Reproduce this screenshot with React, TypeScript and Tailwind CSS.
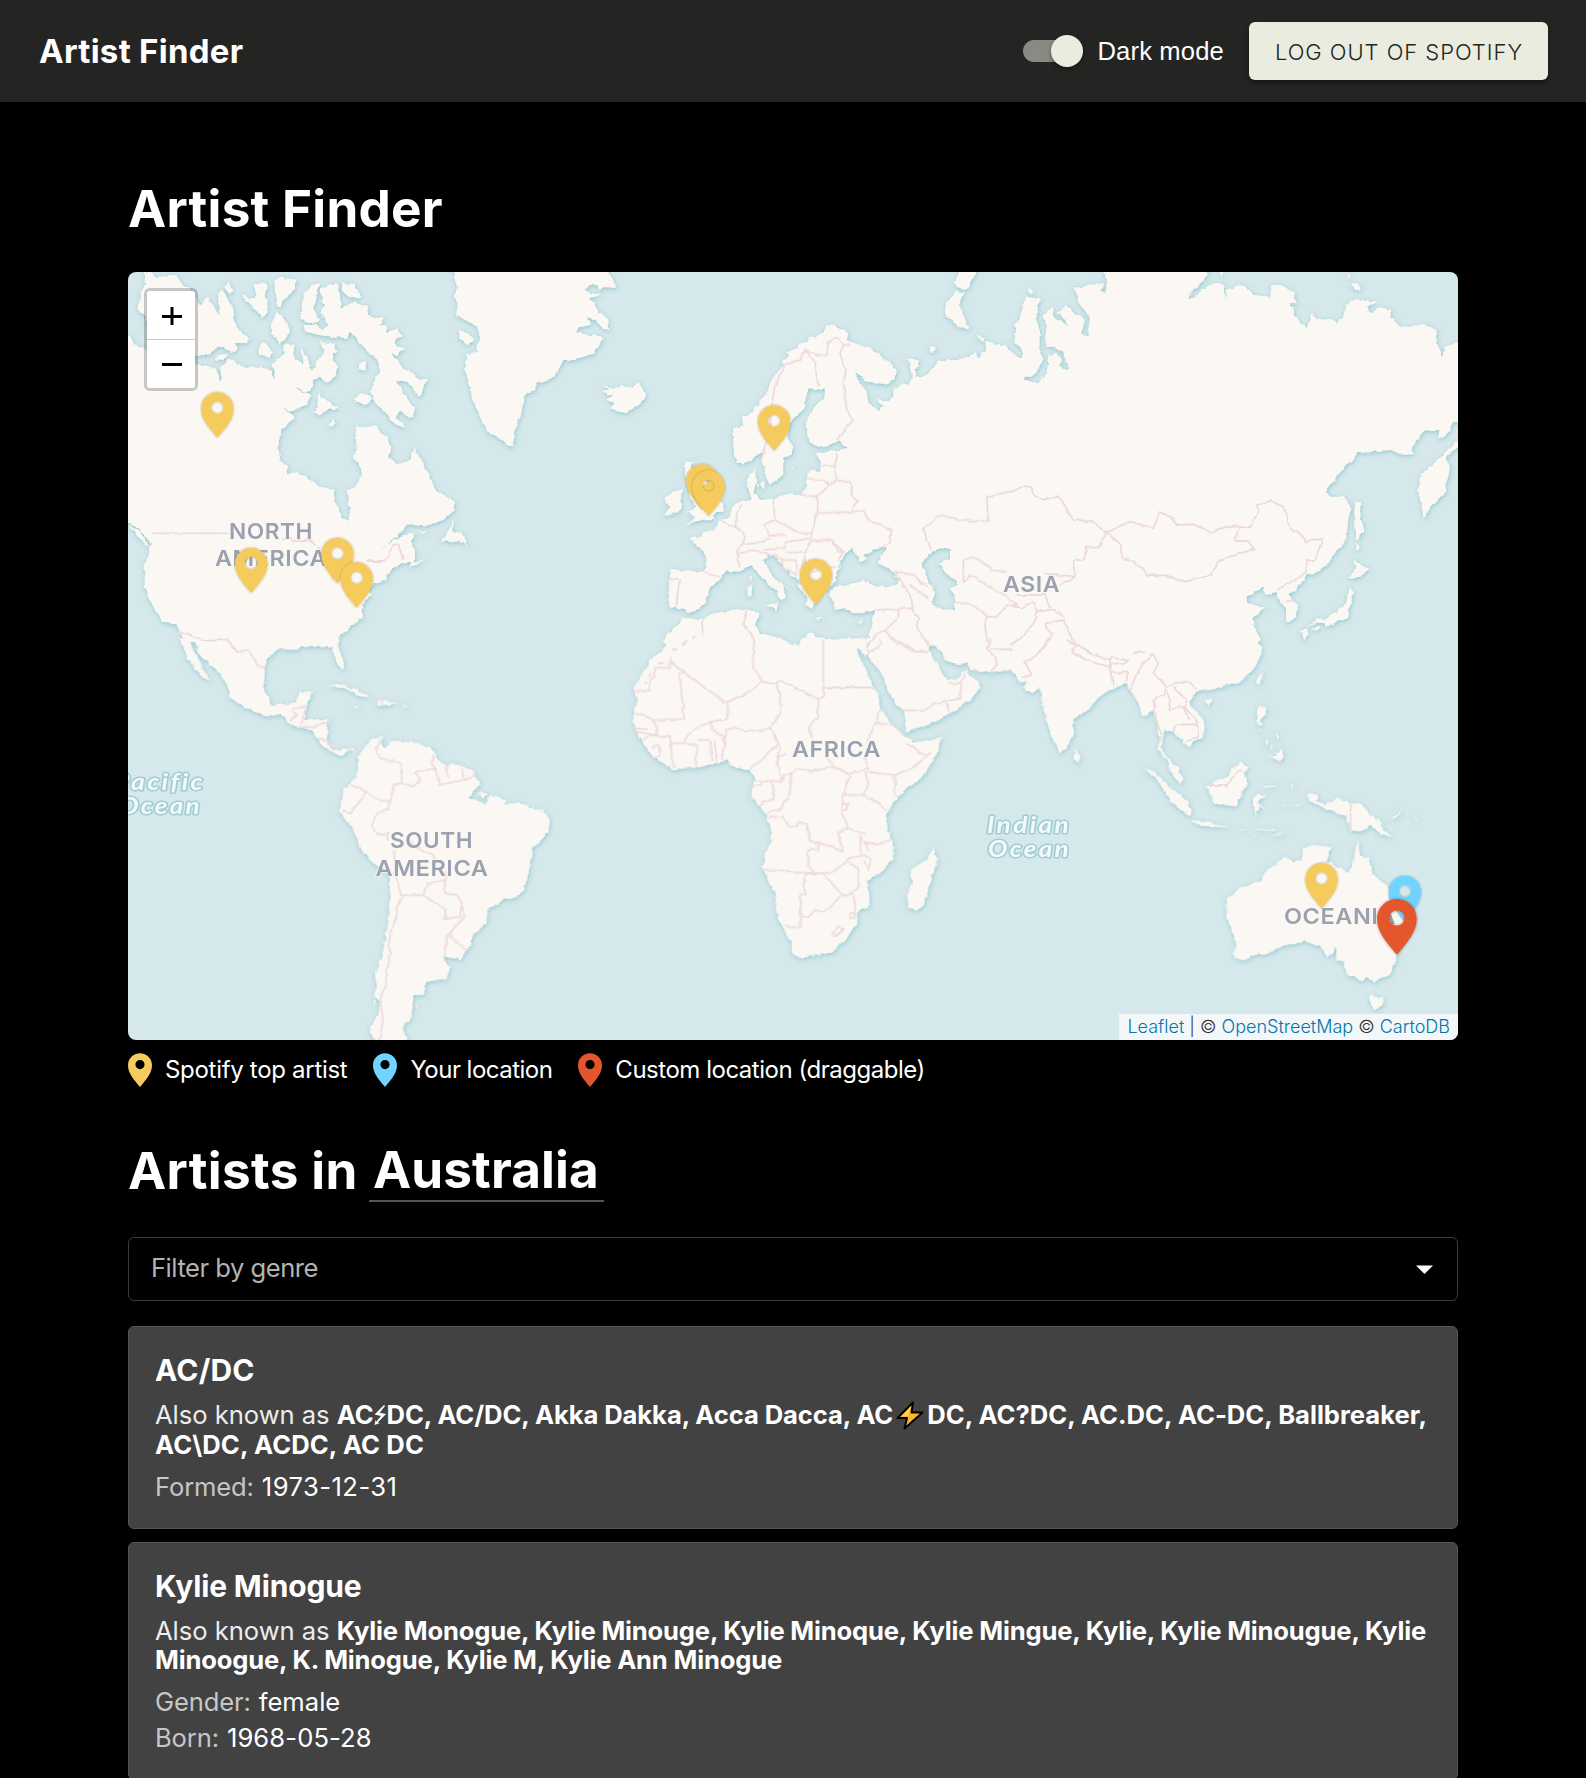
import React from "react";

type Tile = { x: number; y: number; land: string; borders: string };

// Coastlines and country borders, one entry per map tile (3 units per pixel).
const TILES: Tile[] = [
  {
    x: 120,
    y: 265,
    land: `M66,10L95,28 110,38 150,30 172,32 190,66 215,72 200,140 150,200 100,200 78,170 72,150 52,132 62,85 78,52Z
M160,110L228,98 240,118 262,94 280,120 300,150 294,80 306,76 322,100 336,130 344,180 362,200 388,222 380,235 345,238 355,255 330,262 312,245 290,250 270,265 228,275 150,260Z
M310,65L325,52 338,70 330,88Z
M366,92L376,88 388,100 400,100 410,90 395,60 430,52 440,60 435,90 446,110 445,145 425,160 405,135 385,115Z
M462,45L480,38 530,44 525,70 505,95 490,105 482,130 472,125 465,90Z
M600,55L570,60 548,90 541,160 570,178 590,175 603,165 580,130 590,100Z
M603,70L625,60 650,55 660,90 662,130 680,120 700,112 740,125 745,150 770,158 795,160 780,185 800,180 805,200 830,190 850,215 825,225 830,240 855,250 835,270 815,265 850,310 880,325 900,345 925,345 910,365 905,390 890,392 880,365 860,350 828,345 850,380 885,430 878,462 840,440 830,460 862,488 820,475 790,435 765,415 750,380 760,350 780,325 775,290 750,265 725,240 690,200 680,220 640,215 590,210 555,195 548,180 580,180 610,195 625,180 600,140 615,120 600,90Z
M665,55L700,60 725,95 690,100 672,85Z
M455,180L470,140 495,165 510,205 480,240 470,220 452,205Z
M412,262L430,230 460,265 445,280Z
M595,375L605,395 640,420 665,435 625,430 600,452 582,440 592,420Z
M700,398L725,385 765,395 735,420 705,412Z
M718,290L738,288 737,318 716,312Z
M624,478L640,464 645,472 630,484Z M284,283L300,270 325,265 315,278 290,288Z
M-10,205L24,210 50,243 75,245 100,270 228,300 260,305 285,308 295,325 300,352 305,340 300,310 325,280 350,295 375,305 430,305 452,315 460,342 465,320 455,295 490,270 495,235 520,240 525,275 548,300 542,252 560,270 575,320 590,290 605,275 610,255 600,230 640,235 650,260 635,270 655,310 645,335 620,350 600,335 580,350 575,378 555,382 525,365 540,378 575,388 560,420 530,430 510,440 488,428 525,455 500,480 480,510 474,560 480,590 500,600 505,628 530,620 560,635 605,670 640,670 645,715 665,755 685,770 690,735 680,680 715,655 722,625 715,595 697,580 710,555 705,480 735,487 765,480 800,515 812,545 808,575 830,600 845,590 870,585 885,545 900,580 925,625 945,670 1003,712 1000,740 950,778 860,782 830,815 745,888 800,840 850,810 885,805 870,830 885,855 885,880 865,912 900,892 927,880 900,886 850,895 820,910 800,930 800,945 760,960 745,975 755,990 735,1010 725,1035 730,1055 700,1080 660,1110 655,1132 200,1132 165,1075 125,1070 110,1040 90,1010 75,970 72,910 85,860 92,835 60,795 24,770 -10,750Z
M24,778L60,800 88,842 65,828 35,795Z
M995,10L1010,60 1003,90 1012,120 1008,150 1040,165 1070,185 1080,215 1070,260 1040,270 1035,320 1050,360 1058,410 1085,460 1100,495 1140,525 1160,535 1178,545 1185,500 1210,430 1215,390 1250,375 1250,355 1300,340 1330,285 1358,285V0H995Z
M1022,195L1045,205 1060,225 1045,240 1020,225Z
M1000,760L985,800 962,830 1030,830 1045,850 1035,815 1000,795Z M890,795L920,800 915,804Z`,
    borders: `M95,805H325 M485,820L510,818 520,828 565,825 605,850 M630,945L650,940 M170,1105L200,1105 250,1125 285,1128 300,1118 325,1128 350,1160 M740,888L790,888 805,878 815,845 835,840 850,885`,
  },
  {
    x: 570,
    y: 265,
    land: `M-5,288L30,278 65,268 105,218 65,210 20,203 25,188 65,180 45,155 80,165 100,195 118,198 115,160 85,140 75,115 55,100 95,92 45,78 70,55 90,75 105,70 135,65 130,45 115,21V0H-5Z
M92,375L115,375 95,355 130,375 155,360 185,368 205,352 228,385 215,415 165,443 120,430 135,415 108,405 125,392Z
M500,590L488,560 492,520 488,490 520,480 515,455 550,440 565,415 590,385 600,350 620,325 640,300 635,290 655,275 650,262 680,250 690,235 710,230 725,212 740,222 765,185 795,180 835,205 830,225 870,240 900,250 960,290 978,320 972,345 940,360 895,350 855,325 870,350 890,380 895,410 925,435 940,425 920,400 950,410 970,395 970,370 1000,355 1020,360 1025,335 1015,280 1045,285 1050,305 1035,310 1040,335 1070,330 1110,285 1150,285 1170,285 1215,265 1225,280 1250,260 1245,228 1300,240 1340,272 1340,1132 890,1132 905,1085 915,1035 880,1045 850,1045 825,1030 795,1035 785,1000 780,975 800,965 880,948 930,965 975,960 990,945 960,915 925,895 935,870 955,845 910,855 880,870 895,885 870,890 850,850 825,865 810,900 795,935 800,950 780,965 770,972 750,960 735,970 745,1000 735,1010 725,1035 710,1025 712,1000 700,985 685,960 685,945 660,930 640,905 620,880 595,870 580,885 595,915 620,945 660,975 640,965 645,990 635,1012 625,985 590,955 560,920 540,900 510,920 470,918 455,940 425,965 410,1000 395,1025 355,1042 330,1030 300,1028 292,1005 300,935 300,915 400,920 410,885 400,860 360,825 365,815 395,815 400,800 430,795 450,765 475,755 490,720 515,710 545,705 530,650 535,630 555,615 560,645 550,680 575,705 610,700 660,685 690,690 710,665 712,620 730,612 750,625 752,590 740,565 790,560 830,548 805,530 745,548 715,530 708,470 715,450 760,400 762,375 720,370 708,390 705,430 670,460 655,480 655,520 670,545 665,565 640,580 640,630 600,660 595,645 575,590 575,560 550,580 520,598Z
M1085,860L1115,848 1142,852 1140,880 1105,895 1130,925 1165,960 1140,970 1155,1000 1155,1038 1100,1030 1085,1010 1095,980 1065,930 1058,895Z
M572,655L585,652 580,672Z M560,658L568,656 565,668Z M590,1018L625,1015 620,1035Z M532,965L547,960 545,992 533,992Z M537,935L546,935 545,950Z M740,1056L768,1060 742,1064Z M860,1068L880,1062 868,1074Z M664,605L670,602 668,616Z
M345,595L372,585 360,605 368,620 400,640 430,680 460,720 460,735 430,750 430,765 385,768 345,782 378,755 350,742 378,725 360,700 345,625Z
M285,700L310,680 335,672 335,735 290,752 285,745 300,728Z
M280,1135L290,1110 330,1075 340,1055 385,1065 430,1045 500,1035 555,1035 568,1048 555,1080 575,1105 630,1120 650,1135Z
M690,1135L695,1120 720,1105 755,1118 835,1128 845,1135Z
M1175,0L1155,50 1160,70 1190,75 1215,30 1220,0Z M1155,78L1140,100 1125,130 1125,155 1150,170 1160,185 1197,190 1175,140 1172,100 1185,82Z M1080,245L1098,250 1090,265 1080,262Z M1218,205L1240,222 1235,230Z`,
    borders: `M605,420L615,360 645,295 690,285 700,260 720,270 M705,255L735,295 745,365 M700,250L740,272 770,268 775,230 800,218 820,240 840,237 M820,240L810,265 825,310 820,350 830,435 847,465 803,525 M605,420L600,500 580,560 578,575 M800,560L795,605 755,600 M795,605L800,645 M710,640L760,645 778,662 740,695 690,688 M778,662L800,645 840,650 845,685 862,710 845,740 740,745 722,820 M740,695L745,745 M850,740L880,735 895,765 930,780 965,795 960,835 935,845 M610,700L615,765 580,780 600,812 650,810 M615,765L680,800 722,805 M722,820L690,825 650,830 640,850 580,855 M720,828L785,825 805,860 825,860 M785,825L820,860 805,885 M705,865L645,860 M515,715L500,750 500,790 450,765 M500,790L525,805 520,835 500,860 510,905 M520,835L545,840 600,820 M505,865L550,855 600,870 M400,920L455,938 M300,942L328,945 318,1028 M530,1035L520,1075 545,1110 550,1130 M395,1065L400,1110 M720,828L700,880 690,960 M605,865L640,885 680,885 680,920 M635,885L640,910 680,930 M700,880L720,920 800,905 M915,1035L1025,1030 1020,990 975,920 1030,930 1055,955 1075,960 M1020,960L1075,1000 M1025,1030L1045,1060 1040,1085 1075,1140 M945,1095L985,1060 985,1035 M890,1150L915,1110 945,1095 960,1115 1040,1160 1070,1160 M1340,675L1250,695 1255,765 1215,770 1165,765 1115,750 1060,790 1085,858 M1180,950V885L1215,878 1270,915 1310,920 M1180,950L1200,930 1250,960 1345,1020 M1155,1015L1200,1015 1250,1050 1245,1080 1255,1150 M1250,1055L1280,1055 1310,1020 1345,1020 M378,1112L366,1120 M350,1130L335,1138 M320,1150L308,1156`,
  },
  {
    x: 1010,
    y: 265,
    land: `M-5,262L10,265 35,283 42,262 12,230 18,190 12,180 35,140 45,97 90,100 78,160 90,200 88,260 100,280 90,310 70,335 45,335 38,345 85,355 110,320 118,270 140,262 155,285 150,305 175,313 165,290 160,260 130,248 105,250 112,190 100,150 125,125 130,155 175,182 165,165 140,145 170,120 200,150 225,165 215,205 232,215 240,155 205,115 195,70 235,60 285,55 270,75 282,85 292,50 275,21V0H600L590,35 530,100 550,95 605,55 640,55 645,105 650,70 690,60 715,70 730,90 780,95 785,60 810,60 830,72 855,80 858,115 840,115 865,165 890,188 905,145 925,162 960,158 980,172 1000,155 1005,120 1030,102 1105,110 1070,125 1085,145 1110,125 1140,135 1145,160 1175,185 1245,178 1280,195 1282,235 1297,275 1305,240 1345,232H1375V470L1330,475 1320,500 1290,520 1285,495 1240,498 1205,550 1210,568 1185,570 1140,555 1045,565 1010,600 945,678 965,695 1000,695 1025,730 1015,760 1010,820 960,890 930,918 890,930 860,970 835,990 860,1020 862,1060 828,1070 828,1030 808,1010 800,985 765,990 760,965 705,1000 715,1015 765,1028 730,1060 740,1100 755,1132H-5Z
M1375,540L1340,545 1310,580 1320,610 1305,680 1260,730 1242,760 1225,680 1230,630 1290,580 1335,530 1375,520Z
M1038,710L1050,710 1052,760 1063,795 1045,825 1037,820 1035,750Z M1038,830L1048,855 1040,860Z
M1035,885L1050,900 1080,912 1050,935 1015,940 1035,915Z
M1020,965L1033,980 1020,1020 1015,1060 950,1082 945,1070 888,1085 920,1065 950,1060 1000,1025 1012,990Z
M870,1095L890,1090 895,1110 885,1122Z M905,1092L935,1083 920,1098Z
M1022,55L1045,55 1055,75 1030,75Z M1010,32L1020,32 1018,42Z M54,72L72,72 66,84 56,82Z M625,20L640,22 632,34Z`,
    borders: `M0,682L40,665 65,670 70,690 105,705 145,690 190,765 240,768 290,803 360,770 430,790 450,740 490,760 500,780 550,778 605,803 660,782 720,790 745,735 740,720 780,708 820,725 840,790 870,805 885,830 938,822 915,885 888,885 888,925 800,975 M290,803L265,848 230,848 222,883 190,888 195,935 100,925 M290,803L335,840 338,882 375,890 415,930 470,932 530,950 605,930 625,890 690,865 735,850 715,828 675,828 688,792 M195,935L150,960 M0,1025L40,1028 70,1010 80,1035 130,1035 165,1060 M80,1035L70,1075 40,1115 0,1140 M105,1075L160,1065 180,1110 200,1140 250,1165 M105,1075L125,1110 85,1165 M828,1010L850,1005 M20,990H105L120,1030 M370,1165L405,1158`,
  },
  {
    x: 120,
    y: 640,
    land: `M182,-5L200,55 215,70 240,105 270,125 260,100 230,50 202,-5Z
M218,-5L240,45 300,100 330,150 330,175 380,205 440,232 480,222 510,250 545,265 575,270 600,310 640,340 668,347 690,328 705,340 715,370 710,410 670,450 665,490 660,515 700,570 730,640 770,680 810,700 808,800 790,930 765,1010 770,1040 760,1075 780,1080 775,1130 745,1170 775,1210H868L845,1165 875,1130 880,1065 910,1065 915,1028 980,1015 990,985 970,950 1020,958 1045,930 1065,880 1100,850 1102,808 1160,775 1200,768 1225,710 1237,625 1285,575 1290,540 1275,515 1200,490 1155,495 1160,480 1110,465 1095,490 1045,473 1080,435 1055,385 1000,372 975,375 945,345 930,325 900,310 820,300 795,325 780,310 790,287 745,305 735,320 712,350 700,328 670,325 640,330 620,300 625,240 580,235 550,240 560,200 580,155 540,155 525,190 455,195 430,140 440,60 470,28 530,30 545,18 600,18 635,20 650,65 668,92 672,70 655,20 655,-5Z
M618,140L655,130 700,145 748,170 722,172 690,150 650,138Z M775,182L800,180 830,190 800,195 775,198Z M702,198L720,200 708,204Z M852,197L866,200 854,203Z M1072,458L1105,460 1090,475Z M758,1085L764,1080 760,1105Z M890,1092L898,1096 890,1100Z`,
    borders: `M320,-5L350,35 385,30 410,75 437,85 M520,205L555,200 552,235 540,260 575,262 625,245 M510,240L530,225 518,212 M595,298L620,303 640,330 M700,345L712,350 M780,295L768,330 785,355 845,370 845,430 820,430 M845,430L880,440 900,420 885,395 950,385 930,370 945,345 M950,385L960,435 1030,420 1055,415 1065,395 M980,380L985,410 M1025,380L1030,415 M690,435L740,455 780,482 812,482 820,432 M740,455L720,485 690,518 668,510 M812,482L805,510 770,520 755,555 775,585 803,580 803,602 M822,630L825,700 845,770 885,765 910,765 920,730 975,720 975,760 1010,765 1025,790 1020,830 970,838 980,810 910,765 M845,770L830,800 830,840 805,890 812,940 798,990 798,1025 780,1080 790,1140 778,1200 M1025,800L1035,825 985,885 1040,930 M985,885L970,950 M870,600L890,625 940,645 945,665 M978,690V720 M785,180L788,198`,
  },
  {
    x: 570,
    y: 640,
    land: `M285,-5L285,20 240,60 190,145 200,185 185,245 210,290 245,350 310,388 390,382 470,362 495,385 540,390 552,410 548,450 540,465 585,520 600,560 605,605 582,650 580,690 615,765 625,840 665,910 665,935 688,955 760,943 790,935 825,900 862,850 862,820 900,795 895,740 890,725 940,690 970,660 968,600 955,575 948,525 985,465 1060,410 1100,340 1115,292 1030,308 1005,292 1003,280 955,240 930,200 925,160 905,130 870,50 860,25 865,22 885,50 893,40 890,-5H695L685,18 630,-5Z
M888,-5L893,45 940,110 955,155 1000,220 1008,275 1100,245 1140,220 1200,185 1232,138 1215,120 1185,90 1165,115 1130,120 1110,85 1075,30 1085,15 1100,20 1130,60 1160,75 1190,68 1200,90 1260,97 1325,92 1345,112V-8H888Z
M1090,622L1103,660 1090,700 1060,800 1035,810 1015,800 1010,760 1025,725 1022,685 1070,660Z`,
    borders: `M190,152H240V120L255,110V83H300V50 M300,65L462,185 475,185 520,165 580,125 548,80 550,0 M345,98H328L343,237 255,240 M195,222L225,225 255,245 262,285 195,275 M190,265L230,268 M475,185L472,237 420,245 370,270 345,295 345,308 305,310 M580,125L612,132 635,122 745,178 760,170V0 M760,142H920 M745,178V235L730,240 715,270 730,300 M620,130L632,170 630,215 602,262 M455,360L470,270 490,262 530,272 600,268 602,262 L625,310 575,360 540,385 M610,285L628,320 620,370 635,425 555,422 M635,425L640,405 665,400 680,385 720,395 790,380 770,350 M215,300L240,285 300,290 305,340 M305,310L305,350 315,385 M245,320L265,315 270,345 250,355 M345,308L380,318 378,380 M380,300H420L425,365 M420,245L425,270 462,290 460,330 M433,300L440,365 M665,400L660,460 630,510 590,520 M552,437H575V422 M600,425L612,450 610,480 575,485V500 M620,350L650,345 M790,380L840,402 900,385 M890,395L970,405 1030,385 1080,335 M1065,345L1010,310 M890,310L915,250 925,215 945,208 M915,250L970,255 1005,290 M885,350L895,385 M840,402L820,465 880,465 895,430 885,395 M880,465L920,485 950,515 M985,400L975,405V465L985,470 M820,465L815,520 835,565 805,580 810,605 822,635 790,620 720,603 M815,490L835,490 830,510 815,510 M595,530H640L655,560 680,560 685,545 710,550 720,603 M835,565L885,582 M880,610L925,610 965,600 M745,603V630H715V680L735,700 700,698 620,690 580,690 M735,700L785,697 830,665 835,655 885,645 905,660 897,690 885,665 M872,585L870,640 M885,600L895,635 M830,665L865,685 865,735 845,765 M760,700L815,765 850,765 858,825 M815,765L765,815 735,810 715,832 698,832 692,800 M740,703L703,703 703,760 690,765V860L665,862 645,852 M785,882L805,860 818,870 800,890Z M840,820L853,818 855,835 840,836Z M1003,210L1060,213 1090,193 1170,175 1175,130 1135,128 M1128,190L1140,215 M1175,130L1185,100 M890,28L900,38 935,12 925,-5 M960,-5L1030,35 1070,35 M1260,97L1280,75 1275,55 1250,25 1265,-5 M1260,28L1325,28 M225,132L230,122 M236,110L244,100 M264,72L282,68`,
  },
  {
    x: 1010,
    y: 640,
    land: `M-5,82L0,90 35,125 50,122 40,145 65,160 90,145 98,200 120,280 150,338 165,330 190,290 190,240 240,205 265,175 290,155 350,130 380,185 395,228 430,215 445,270 450,300 442,330 470,360 480,395 512,430 518,415 505,385 460,340 455,325 462,270 490,275 535,322 550,305 580,290 585,260 570,225 535,190 560,155 600,150 650,135 690,125 725,95 755,50 755,20 735,-5H-5Z
M192,325L212,350 205,367 190,362Z M400,380L440,400 490,450 540,490 543,525 520,520 480,480 450,430Z M545,540L600,545 655,562 600,560 550,550Z
M588,440L620,425 650,410 690,365 718,380 700,400 712,430 695,460 680,500 610,490Z
M725,480L740,462 770,465 745,482 768,515 750,500 738,525 730,500Z
M745,198L765,200 768,220 752,240 755,258 738,240Z M770,348L795,345 815,325 822,350 808,368 795,352Z M765,295L775,300 772,320Z M795,280L808,288 806,300Z M780,310L792,325 785,330Z M745,265L755,272 748,275Z
M890,465L905,460 925,465 920,480 945,490 980,475 1020,485 1060,498 1085,525 1110,540 1115,560 1148,592 1110,580 1080,555 1050,575 1020,570 1010,530 950,510 930,495 900,480Z M1130,530L1155,528 1175,512 1160,535Z M1208,530L1225,540 1220,542Z
M755,95L760,110 745,138 738,125Z M583,180L608,175 595,198Z M680,568L705,568 700,572Z M735,567L800,568 790,572 740,571Z M788,588L830,570 800,588Z M725,582L742,588 735,590Z M820,492L830,498 822,500Z M845,492L880,494 860,497Z M745,440L800,436 785,444Z M842,430L850,436 845,444Z
M1043,603L1055,650 1075,655 1090,705 1130,735 1140,775 1160,810 1180,840 1175,900 1160,945 1140,1005 1090,1025 1075,1012 1060,1022 1010,1005 1000,965 978,960 980,920 950,955 930,920 885,905 800,925 780,940 740,942 700,962 670,950 678,905 650,830 650,775 690,745 750,725 775,685 830,648 850,665 870,660 880,625 915,615 965,622 950,665 1015,697 1030,670 1035,630Z
M1075,1063L1095,1072 1122,1068 1115,1095 1097,1112 1080,1090Z`,
    borders: `M35,112L65,105 45,65 75,50 118,0 M190,20L205,15 240,40 300,60 300,80 240,65 190,40Z M170,0L200,15 M300,65L305,52 355,62 340,72 300,70V90L310,140 M305,98L358,98 345,125 M360,155L375,110 400,70 430,45 445,70 430,100 470,140 460,165 430,180 440,240 455,300 M470,155L480,180 475,210 520,200 540,240 M490,140L530,180 525,200 560,240 565,290 530,305 M500,255L560,252 M500,255L490,275 M470,140L500,128 540,128 560,148 M595,435L655,435 680,395 698,392 M1022,488V572`,
  },
];

const PINS = [
  { x: 217.5, y: 392.3, w: 32.5, c: "#f4cb5c" },
  { x: 774.3, y: 405.3, w: 32.5, c: "#f4cb5c" },
  { x: 702.4, y: 464.3, w: 32.5, c: "#f4cb5c" },
  { x: 708.8, y: 470.5, w: 32.5, c: "#f4cb5c" },
  { x: 337.6, y: 538, w: 32.5, c: "#f4cb5c" },
  { x: 251.3, y: 547.7, w: 32.5, c: "#f4cb5c" },
  { x: 816, y: 559, w: 32.5, c: "#f4cb5c" },
  { x: 356.8, y: 562.3, w: 32.5, c: "#f4cb5c" },
  { x: 1321.7, y: 863, w: 32.5, c: "#f4cb5c" },
  { x: 1405, y: 875.8, w: 32.5, c: "#70d4ff" },
  { x: 1397, y: 899, w: 40, c: "#e3562d" },
];

const PIN_PATH =
  "M16 0C7.1 0 0 7 0 16c0 10.500 6.400 17.500 16 29C25.600 33.500 32 26.500 32 16 32 7 24.900 0 16 0Z M16 9.200a6.100 6.100 0 1 1 0 12.200a6.100 6.100 0 1 1 0-12.200Z";

const CONTINENTS = [
  { t: "NORTH", x: 229, y: 539, w: 84 },
  { t: "AMERICA", x: 215, y: 566, w: 112 },
  { t: "SOUTH", x: 390, y: 848.3, w: 83 },
  { t: "AMERICA", x: 375.5, y: 875.7, w: 113 },
  { t: "AFRICA", x: 792, y: 756.7, w: 89 },
  { t: "ASIA", x: 1003, y: 591.7, w: 57 },
  { t: "OCEANIA", x: 1284, y: 924.3, w: 112 },
];

const OCEANS = [
  { t: "Pacific", x: 114, y: 790, w: 91 },
  { t: "Ocean", x: 119, y: 813.5, w: 83 },
  { t: "Indian", x: 987, y: 832.7, w: 84 },
  { t: "Ocean", x: 988, y: 856.7, w: 83 },
];

function WorldMap() {
  return (
    <svg className="block h-full w-full" viewBox="128 272 1330 768" preserveAspectRatio="none">
      <defs>
        <filter id="coast" x="0" y="0" width="1600" height="1100" filterUnits="userSpaceOnUse" colorInterpolationFilters="sRGB">
          <feTurbulence type="fractalNoise" baseFrequency="0.14" numOctaves="2" seed="4" result="n" />
          <feDisplacementMap in="SourceGraphic" in2="n" scale="5" xChannelSelector="R" yChannelSelector="G" result="land" />
          <feDropShadow in="land" dx="0.5" dy="1.3" stdDeviation="2" floodColor="#8cc3cb" floodOpacity="0.9" />
        </filter>
        <filter id="frontier" x="0" y="0" width="1600" height="1100" filterUnits="userSpaceOnUse" colorInterpolationFilters="sRGB">
          <feTurbulence type="fractalNoise" baseFrequency="0.12" numOctaves="2" seed="9" result="n" />
          <feDisplacementMap in="SourceGraphic" in2="n" scale="4" xChannelSelector="R" yChannelSelector="G" />
        </filter>
        <filter id="pinshadow" x="-30%" y="-30%" width="160%" height="160%">
          <feDropShadow dx="0" dy="0" stdDeviation="1.1" floodColor="#000" floodOpacity="0.35" />
        </filter>
      </defs>
      <rect x="128" y="272" width="1330" height="768" fill="#d5e8eb" />
      <g filter="url(#coast)" fill="#fbf8f3" fillRule="evenodd">
        {TILES.map((t, i) => (
          <path key={i} transform={`translate(${t.x} ${t.y}) scale(0.33333)`} d={t.land} />
        ))}
      </g>
      <g fill="none" stroke="#eedadd" strokeWidth="5.400" strokeLinejoin="round" filter="url(#frontier)">
        {TILES.map((t, i) => (
          <path key={i} transform={`translate(${t.x} ${t.y}) scale(0.33333)`} d={t.borders} />
        ))}
      </g>
      <g fill="#9aa2b1" fontFamily="Inter, sans-serif" fontSize="22" fontWeight="600" stroke="#fbf8f3" strokeOpacity="0.6" strokeWidth="2" paintOrder="stroke" letterSpacing="0.500">
        {CONTINENTS.map((l, i) => (
          <text key={i} x={l.x} y={l.y} textLength={l.w} lengthAdjust="spacingAndGlyphs">
            {l.t}
          </text>
        ))}
      </g>
      <g fill="#f4fafb" fontFamily="Lato, sans-serif" fontStyle="italic" fontWeight="700" fontSize="22" letterSpacing="2" stroke="#a3cdd4" strokeWidth="3" strokeLinejoin="round" paintOrder="stroke">
        {OCEANS.map((l, i) => (
          <text key={i} x={l.x} y={l.y} textLength={l.w} lengthAdjust="spacingAndGlyphs">
            {l.t}
          </text>
        ))}
      </g>
      {PINS.map((p, i) => (
        <g key={i} transform={`translate(${p.x - p.w / 2} ${p.y}) scale(${p.w / 32.2})`} filter="url(#pinshadow)">
          <path d={PIN_PATH} fill={p.c} fillRule="evenodd" />
        </g>
      ))}
    </svg>
  );
}

function LegendItem({ color, label, track }: { color: string; label: string; track: string }) {
  return (
    <div className="flex items-center gap-[13px]">
      <svg className="h-[34px] w-6" viewBox="0 0 32 45">
        <path d={PIN_PATH} fill={color} fillRule="evenodd" />
      </svg>
      <span className={track}>{label}</span>
    </div>
  );
}

type Fact = { label: string; value: string; track: string };

function Card({ name, nameTrack, aka, facts }: { name: string; nameTrack: string; aka: React.ReactNode; facts: Fact[] }) {
  return (
    <article className="rounded-md border border-[#555] bg-[#424242] px-[26px] pt-[25px] pb-[23px] text-[25.6px]">
      <h3 className={`text-[30px] leading-9 font-bold ${nameTrack}`}>{name}</h3>
      <p className="mt-3 leading-[29px] whitespace-nowrap">
        <span className="tracking-[-0.04px] text-[#ececec]">Also known as </span>
        <b className="font-bold tracking-[-0.18px]">{aka}</b>
      </p>
      <dl className="mt-[10px]">
        {facts.map((f) => (
          <div key={f.label} className="flex gap-2 leading-9">
            <dt className="tracking-[-0.15px] text-[#c6c6c6]">{f.label}:</dt>
            <dd className={f.track}>{f.value}</dd>
          </div>
        ))}
      </dl>
    </article>
  );
}

function Bolt() {
  return (
    <svg className="mx-[3px] inline-block h-[29px] w-7 align-[-6px]" viewBox="0 0 28 29">
      <path d="M17 1.500L1.500 17H11L8.500 27.500 26.500 11.500H15.500Z" fill="#fdb92e" stroke="#000" strokeWidth="2" strokeLinejoin="round" />
      <path d="M15 5L6 15h6z" fill="#ffd05c" />
    </svg>
  );
}

function SmallBolt() {
  return (
    <svg className="inline-block h-5 w-[13px] align-[-1px]" viewBox="0 0 12 20">
      <path d="M9.500 0L0 9.500 6.500 11 1.500 17 1 14.500 0 20 5.500 18 3.200 17.600 11.500 9 5.200 7.700 10.500 1Z" fill="#fff" />
    </svg>
  );
}

export default function App() {
  return (
    <div className="h-[1778px] w-full overflow-hidden bg-black font-['Inter',sans-serif] text-white">
      <header className="flex h-[102px] items-center bg-[#242422] pr-[38px] pl-[39px]">
        <span className="pt-0.5 text-[33px] font-bold tracking-[0.28px]">Artist Finder</span>
        <div className="ml-auto flex items-center">
          <div className="flex h-[22px] w-[60px] items-center">
            <div className="h-[22px] w-[54px] shrink-0 rounded-full bg-[#898a84]" />
            <div className="-ml-[26px] h-8 w-8 shrink-0 rounded-full bg-[#e9ecdf] shadow-[0_2px_4px_rgba(0,0,0,0.4)]" />
          </div>
          <span className="ml-[14px] font-['Liberation_Sans',sans-serif] text-[25.6px] tracking-[0.15px]">Dark mode</span>
          <button className="ml-[25px] h-[58px] w-[299px] rounded-md bg-[#e9ecdf] pt-0.5 pl-px text-[22px] font-light tracking-[0.950px] text-[#242422] shadow-[0_3px_5px_rgba(0,0,0,0.4)]">
            LOG OUT OF SPOTIFY
          </button>
        </div>
      </header>

      <main className="px-32 pt-[76px]">
        <h1 className="text-[51.2px] leading-[60px] font-bold tracking-[0.25px]">Artist Finder</h1>

        <section className="relative mt-[34px] h-[768px] overflow-hidden rounded-lg">
          <WorldMap />
          <div className="absolute top-4 left-4 w-[54px] rounded-md border-[3px] border-black/20 bg-clip-padding">
            <button className="flex h-12 w-12 items-center justify-center rounded-t-[3px] bg-white pl-px">
              <svg width="20" height="20" viewBox="0 0 20 20">
                <path d="M0 11.500H20M10 2V20" stroke="#000" strokeWidth="3" />
              </svg>
            </button>
            <button className="flex h-[49px] w-12 items-center justify-center rounded-b-[3px] border-t border-[#ccc] bg-white pl-px">
              <svg width="20" height="20" viewBox="0 0 20 20">
                <path d="M0 10.500H20" stroke="#000" strokeWidth="3" />
              </svg>
            </button>
          </div>
          <div className="absolute right-0 bottom-0 h-[26px] bg-[#f3f7fa] pr-2 pl-2 text-[18px] leading-[26px] font-light whitespace-nowrap text-[#333]">
            <span className="text-[#0078a8]">Leaflet</span> | © <span className="text-[#0078a8]">OpenStreetMap</span> ©{" "}
            <span className="text-[#0078a8]">CartoDB</span>
          </div>
        </section>

        <div className="mt-[13px] flex gap-[26px] text-[24px] leading-[34px] whitespace-nowrap">
          <LegendItem color="#f4cb5c" label="Spotify top artist" track="tracking-[-0.3px]" />
          <LegendItem color="#70d4ff" label="Your location" track="tracking-[-0.52px]" />
          <LegendItem color="#e3562d" label="Custom location (draggable)" track="tracking-[-0.48px]" />
        </div>

        <div className="mt-[51px] flex text-[51.2px] leading-[60px] font-bold">
          <h2 className="w-[241px] pt-[2px] tracking-[0.35px] whitespace-nowrap">Artists in</h2>
          <div className="w-[235px] border-b-2 border-[#555] pt-px pb-px pl-1 tracking-[0.1px]">Australia</div>
        </div>

        <div className="mt-[35px] flex h-16 items-center justify-between rounded-md border border-[#3b3b3b] pr-[24px] pl-[22px]">
          <span className="pb-0.5 text-[25.6px] tracking-[-0.5px] text-[#b3b3b3]">Filter by genre</span>
          <svg width="17" height="9" viewBox="0 0 17 9">
            <path d="M0 0.500H17L8.500 9Z" fill="#fff" />
          </svg>
        </div>

        <div className="mt-[25px] flex flex-col gap-[13px]">
          <Card
            name="AC/DC"
            nameTrack="tracking-[0.15px]"
            aka={
              <>
                <span className="tracking-[-0.09px]">
                  AC
                  <SmallBolt />
                  DC, AC/DC, Akka Dakka, Acca Dacca, AC
                </span>
                <Bolt />
                <span className="tracking-[0.01px]">DC, AC?DC, AC.DC, AC-DC, Ballbreaker,</span>
                <br />
                <span className="tracking-[0.12px]">AC\DC, ACDC, AC DC</span>
              </>
            }
            facts={[{ label: "Formed", value: "1973-12-31", track: "tracking-[0.45px]" }]}
          />
          <Card
            name="Kylie Minogue"
            nameTrack="tracking-[-0.15px]"
            aka={
              <>
                Kylie Monogue, Kylie Minouge, Kylie Minoque, Kylie Mingue, Kylie, Kylie Minougue, Kylie
                <br />
                Minoogue, K. Minogue, Kylie M, Kylie Ann Minogue
              </>
            }
            facts={[
              { label: "Gender", value: "female", track: "tracking-[0px]" },
              { label: "Born", value: "1968-05-28", track: "tracking-[0.1px]" },
            ]}
          />
        </div>
      </main>
    </div>
  );
}
